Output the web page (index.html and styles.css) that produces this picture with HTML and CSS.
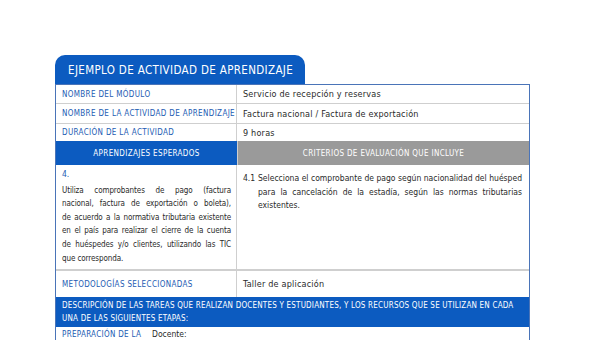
FILE: index.html
```html
<!DOCTYPE html>
<html lang="es">
<head>
<meta charset="utf-8">
<link rel="stylesheet" href="styles.css">
</head>
<body>
<div class="card">
  <div class="tab">EJEMPLO DE ACTIVIDAD DE APRENDIZAJE</div>
  <div class="sheet">
    <div class="row r1">
      <div class="lbl">NOMBRE DEL MÓDULO</div>
      <div class="val">Servicio de recepción y reservas</div>
    </div>
    <div class="row r2">
      <div class="lbl">NOMBRE DE LA ACTIVIDAD DE APRENDIZAJE</div>
      <div class="val">Factura nacional / Factura de exportación</div>
    </div>
    <div class="row r3">
      <div class="lbl">DURACIÓN DE LA ACTIVIDAD</div>
      <div class="val">9 horas</div>
    </div>
    <div class="row head">
      <div class="h-blue">APRENDIZAJES ESPERADOS</div>
      <div class="h-grey">CRITERIOS DE EVALUACIÓN QUE INCLUYE</div>
    </div>
    <div class="row content">
      <div class="ae">
        <div class="num">4.</div>
        <p>
          <span class="ln">Utiliza comprobantes de pago (factura</span>
          <span class="ln">nacional, factura de exportación o boleta),</span>
          <span class="ln">de acuerdo a la normativa tributaria existente</span>
          <span class="ln">en el país para realizar el cierre de la cuenta</span>
          <span class="ln">de huéspedes y/o clientes, utilizando las TIC</span>
          <span class="ln last">que corresponda.</span>
        </p>
      </div>
      <div class="ce">
        <div class="crit"><span class="cn">4.1</span><p>Selecciona el comprobante de pago según nacionalidad del huésped para la cancelación de la estadía, según las normas tributarias existentes.</p></div>
      </div>
    </div>
    <div class="row metodo">
      <div class="lbl">METODOLOGÍAS SELECCIONADAS</div>
      <div class="val">Taller de aplicación</div>
    </div>
    <div class="band">DESCRIPCIÓN DE LAS TAREAS QUE REALIZAN DOCENTES Y ESTUDIANTES, Y LOS RECURSOS QUE SE UTILIZAN EN CADA UNA DE LAS SIGUIENTES ETAPAS:</div>
    <div class="row prep">
      <div class="lbl2">PREPARACIÓN DE LA ACTIVIDAD</div>
      <div class="val2">Docente:</div>
    </div>
  </div>
</div>
</body>
</html>
```
FILE: styles.css
```css
html, body {
  margin: 0;
  padding: 0;
  background: #fff;
}
body {
  font-family: "DejaVu Sans Condensed", "DejaVu Sans", sans-serif;
  font-stretch: condensed;
  color: #2a2a2a;
}
.card {
  margin: 55px 0 0 55px;
  width: 475px;
}
.tab {
  width: 250px;
  height: 29px;
  box-sizing: border-box;
  background: #0c5bc0;
  color: #fff;
  border-radius: 10px 10px 0 0;
  font-size: 11.5px;
  line-height: 30px;
  padding-left: 13px;
  letter-spacing: 0.35px;
}
.sheet {
  border: 1px solid #4a74b8;
  border-bottom: none;
  background: #fff;
}
.row {
  display: grid;
  grid-template-columns: 181px 1fr;
  border-top: 1px solid #cfcfcf;
}
.row:first-child { border-top: none; }
.lbl {
  color: #1d5cb3;
  font-size: 8px;
  padding-left: 6px;
  display: flex;
  align-items: center;
  border-right: 1px solid #cfcfcf;
  letter-spacing: 0.35px;
}
.val {
  font-size: 9px;
  padding-left: 6px;
  display: flex;
  align-items: center;
  letter-spacing: 0.2px;
}
.r1 { height: 18px; }
.r2 { height: 19px; }
.r3 { height: 17px; }
.head { height: 24px; border-top: none; }
.h-blue, .h-grey {
  color: #fff;
  font-size: 8px;
  display: flex;
  align-items: center;
  justify-content: center;
  letter-spacing: 0.35px;
}
.h-blue { background: #0c5bc0; }
.h-grey { background: #9a9a9a; border-left: 1px solid #cfcfcf; }
.content {
  height: 104px;
  border-top: none;
  border-bottom: 2px solid #cfcfcf;
}
.ae {
  padding: 3px 5px 0 6px;
  border-right: 1px solid #cfcfcf;
  font-size: 8px;
  line-height: 13.6px;
}
.num { color: #1d5cb3; margin-bottom: 2px; font-size: 8.5px; }
.ae p {
  margin: 0;
  letter-spacing: -0.1px;
}
.ln {
  display: block;
  white-space: nowrap;
  text-align: justify;
  text-align-last: justify;
}
.ln.last { text-align-last: left; }
.ce {
  padding: 7px 7px 0 6px;
  font-size: 8.5px;
  line-height: 13.6px;
}
.crit { display: flex; }
.cn { width: 15px; flex: none; }
.crit p { margin: 0; text-align: justify; }
.metodo { height: 26px; border-top: none; }
.band {
  background: #0c5bc0;
  color: #fff;
  font-size: 8px;
  line-height: 13px;
  padding: 2px 6px 3px 6px;
  height: 25px;
  letter-spacing: 0.2px;
  word-spacing: 0;
}
.prep {
  grid-template-columns: 90px 1fr;
  border-top: none;
  height: 40px;
}
.lbl2 {
  color: #1d5cb3;
  font-size: 8px;
  padding: 2px 0 0 6px;
  line-height: 11px;
  letter-spacing: 0.3px;
}
.val2 {
  font-size: 8.5px;
  padding: 2px 0 0 6px;
}
```
